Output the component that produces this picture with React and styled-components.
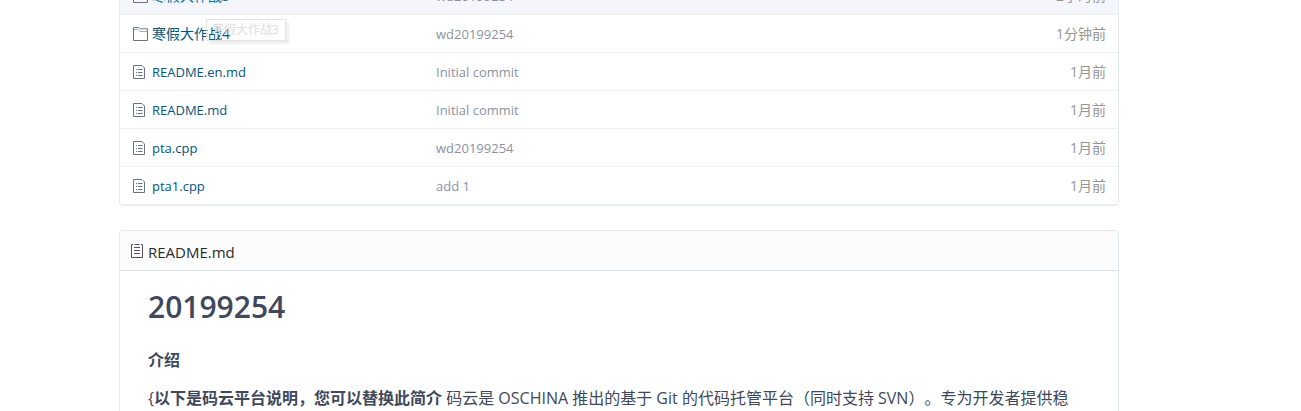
import React from 'react';
import styled, { createGlobalStyle } from 'styled-components';

const GlobalStyle = createGlobalStyle`
* {
  box-sizing: border-box;
}
body {
  margin: 0;
  background: #fff;
  overflow: hidden;
  font-family: "Open Sans", "Noto Sans CJK SC", sans-serif;
  font-size: 14px;
  color: #40485b;
}
`;

const Page = styled.main`
  display: flex;
  flex-direction: column;
  gap: 24px;
  height: 100vh;
  overflow: hidden;
  padding: 0 182px 0 119px;
`;

const FilePanel = styled.section`
  flex: none;
  margin-top: -24px;
  border: 1px solid #e3e9ed;
  border-radius: 4px;
`;

const FileTable = styled.table`
  width: 100%;
  table-layout: fixed;
  border-collapse: separate;
  border-spacing: 0;
`;

const Row = styled.tr`
  background: ${(props) => (props.$active ? '#f5f6fb' : 'transparent')};
`;

const Cell = styled.td`
  height: 38px;
  padding: 1px 12px 0;
  border-bottom: 1px solid #edf1f5;
  line-height: 20px;
  white-space: nowrap;
  text-align: ${(props) => props.$align || 'left'};
  width: ${(props) => props.$width || 'auto'};
  color: ${(props) => props.$color || '#8c92a4'};
`;

const NameBox = styled.div`
  position: relative;
  display: flex;
  align-items: center;
  gap: 4px;
`;

const FileLink = styled.a`
  color: ${(props) => (props.$active ? '#0079ad' : '#005980')};
  font-size: ${(props) => (props.$small ? '13px' : '14px')};
  text-decoration: none;
`;

const MessageLink = styled.a`
  color: #8c92a4;
  font-size: 13px;
  text-decoration: none;
`;

const Tooltip = styled.span`
  position: absolute;
  left: 74px;
  top: -5px;
  width: 80px;
  height: 22px;
  padding: 0 5px;
  border: 1px solid #e4e4e4;
  box-shadow: 3px 3px 2px rgba(0, 0, 0, 0.07);
  font-size: 12px;
  line-height: 20px;
  color: #dedede;
`;

const ReadmePanel = styled.section`
  flex: none;
  border: 1px solid #e3e9ed;
  border-radius: 4px;
`;

const ReadmeHeader = styled.header`
  display: flex;
  align-items: center;
  gap: 4px;
  height: 40px;
  padding: 2px 10px 0;
  border-bottom: 1px solid #dbe3ea;
  border-radius: 4px 4px 0 0;
  background: #fcfcfc;
  color: #2b2b2b;
  font-size: 15px;
`;

const ReadmeBody = styled.article`
  padding: 16px 28px;
  font-size: 16px;
  line-height: 26px;
  text-spacing-trim: space-all;
`;

const Title = styled.h1`
  margin: 0 0 20px;
  font-size: 30px;
  font-weight: 600;
  line-height: 40px;
`;

const Subtitle = styled.h4`
  margin: 0 0 12px;
  font-size: 16px;
  font-weight: 700;
  line-height: 26px;
`;

const Paragraph = styled.p`
  margin: 0;
`;

const Icon = styled.svg`
  flex: none;
  display: block;
  fill: none;
  stroke: ${(props) => props.$color || '#6d7287'};
`;

const FolderIcon = () => (
  <Icon width="16" height="16" viewBox="0 0 16 16">
    <path d="M1.5 14.5V1.5H6.5L8.5 2.8H15.5V14.5Z" />
    <path d="M1.5 3.5H6L8 5.5H15.5" strokeOpacity="0.6" />
  </Icon>
);

const FileIcon = () => (
  <Icon width="16" height="16" viewBox="0 0 16 16">
    <path d="M1.5 1.5H10L12.5 4V14.5H1.5Z" />
    <path d="M4 5.5H5M6 5.5H10.5M4 8.5H5M6 8.5H10.5M4 11.5H5M6 11.5H10.5" />
  </Icon>
);

const ReadmeIcon = () => (
  <Icon width="14" height="16" viewBox="0 0 14 16" $color="#5b4a60">
    <path d="M3 0.5H1.5V13.5H12.5V0.5H11M4.5 0.5H9.5M4 3.5H10M4 6.5H10M4 9.5H10" />
  </Icon>
);

const files = [
  { name: '寒假大作战3', message: 'wd20199254', time: '2小时前', folder: true, active: true },
  { name: '寒假大作战4', message: 'wd20199254', time: '1分钟前', folder: true, tip: '寒假大作战3' },
  { name: 'README.en.md', message: 'Initial commit', time: '1月前' },
  { name: 'README.md', message: 'Initial commit', time: '1月前' },
  { name: 'pta.cpp', message: 'wd20199254', time: '1月前' },
  { name: 'pta1.cpp', message: 'add 1', time: '1月前' },
];

const FileRow = ({ file }) => (
  <Row $active={file.active}>
    <Cell $width="304px">
      <NameBox>
        {file.folder ? <FolderIcon /> : <FileIcon />}
        <FileLink href="#" $active={file.active} $small={!file.folder}>{file.name}</FileLink>
        {file.tip && <Tooltip role="tooltip">{file.tip}</Tooltip>}
      </NameBox>
    </Cell>
    <Cell>
      <MessageLink href="#">{file.message}</MessageLink>
    </Cell>
    <Cell $width="160px" $align="right" $color="#969696">{file.time}</Cell>
  </Row>
);

function App() {
  return (
    <>
      <GlobalStyle />
      <Page>
        <FilePanel>
          <FileTable>
            <tbody>
              {files.map((file) => (
                <FileRow key={file.name} file={file} />
              ))}
            </tbody>
          </FileTable>
        </FilePanel>
        <ReadmePanel>
          <ReadmeHeader>
            <ReadmeIcon />
            README.md
          </ReadmeHeader>
          <ReadmeBody>
            <Title>20199254</Title>
            <Subtitle>介绍</Subtitle>
            <Paragraph>
              {'{'}
              <strong>以下是码云平台说明，您可以替换此简介</strong> 码云是 OSCHINA 推出的基于 Git 的代码托管平台（同时支持 SVN）。专为开发者提供稳
            </Paragraph>
          </ReadmeBody>
        </ReadmePanel>
      </Page>
    </>
  );
}

export default App;
